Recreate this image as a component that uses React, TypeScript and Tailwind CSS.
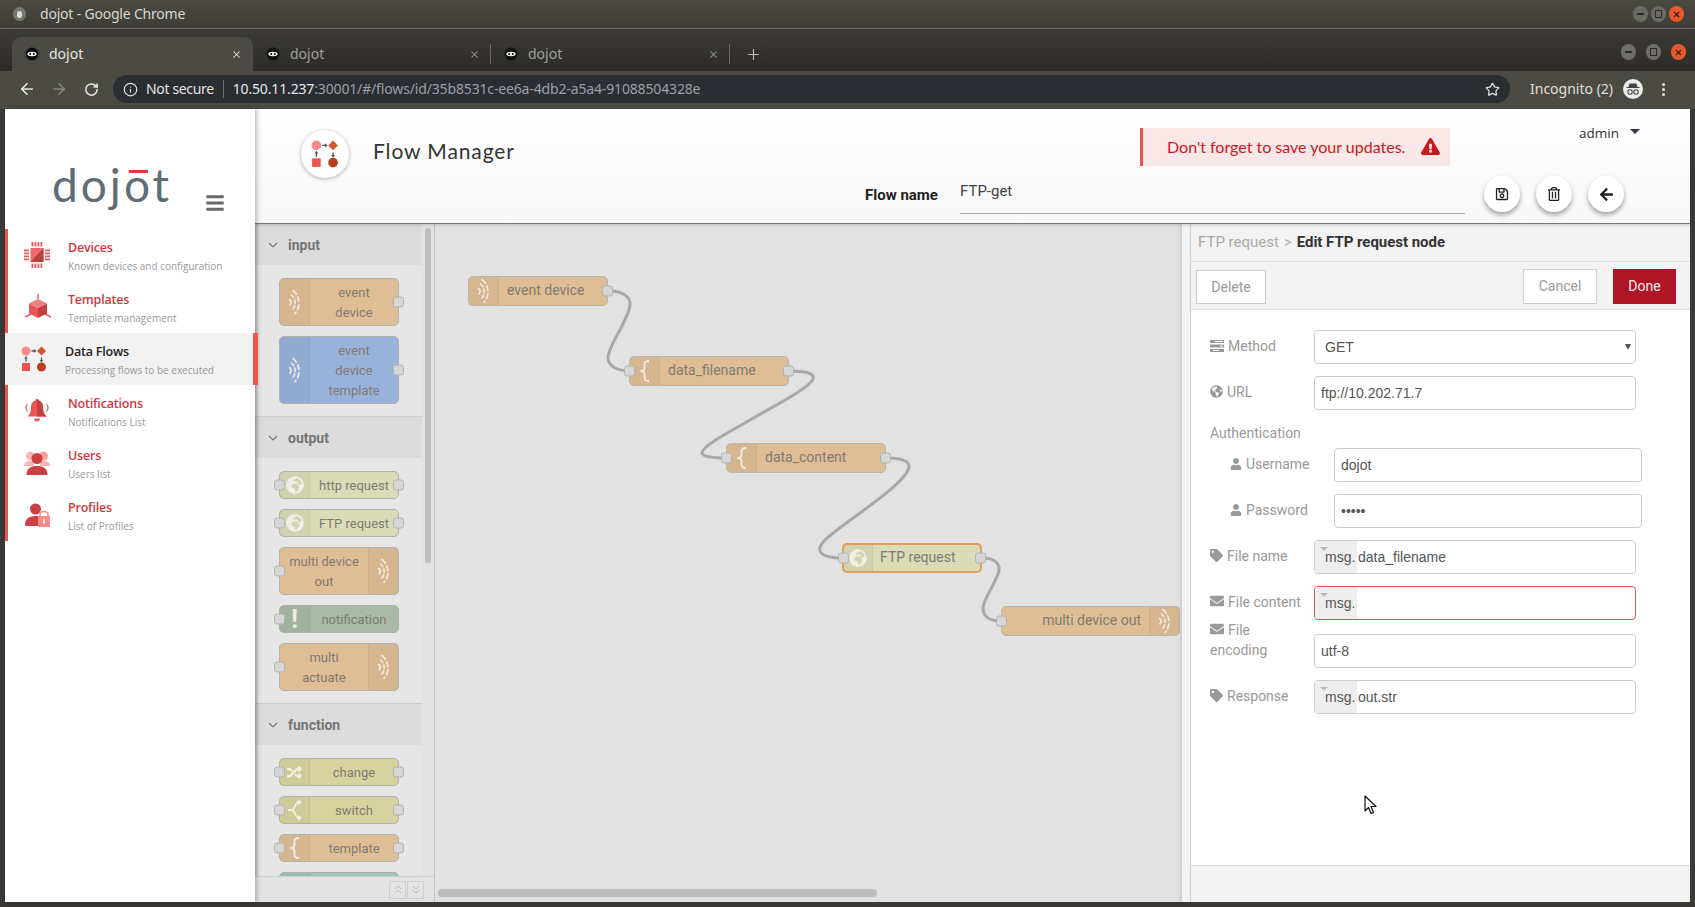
import type { ReactNode } from "react";
import { ArrowLeft, ArrowRight, Info, MoreVertical, Plus, RotateCw, Star, X } from "lucide-react";
import {
  FaArrowLeft,
  FaBars,
  FaEnvelope,
  FaExclamationTriangle,
  FaGlobeAfrica,
  FaGlobeAmericas,
  FaRandom,
  FaRegSave,
  FaRegTrashAlt,
  FaTag,
  FaUser,
} from "react-icons/fa";

function Favicon() {
  return (
    <svg width="14" height="14" viewBox="0 0 14 14" className="shrink-0">
      <circle cx="7" cy="7" r="6.5" fill="#111" />
      <ellipse cx="7" cy="7" rx="4.6" ry="2.2" fill="#eee" />
      <circle cx="5.2" cy="7" r="1" fill="#111" />
      <circle cx="8.8" cy="7" r="1" fill="#111" />
    </svg>
  );
}

function WinBtn({ kind, big }: { kind: "min" | "max" | "close"; big?: boolean }) {
  const bg = kind === "close" ? "bg-[#e4592a]" : big ? "bg-[#6f6e69]" : "bg-[#6a6964]";
  return (
    <div className={`flex h-[16px] w-[15px] items-center justify-center rounded-full ${bg}`}>
      {kind === "min" && <div className="h-[1.5px] w-[7px] bg-[#2d2c29]" />}
      {kind === "max" && <div className="h-[8px] w-[7px] border border-[#2d2c29]" />}
      {kind === "close" && <X size={9} strokeWidth={3} color="#3a1a0c" />}
    </div>
  );
}

function Tab({ active, width, sep }: { active?: boolean; width: string; sep?: boolean }) {
  return (
    <div className={`relative flex h-[34px] items-center pl-[13px] ${width} ${active ? "rounded-t-[9px] bg-[#4b4a44]" : ""}`}>
      <Favicon />
      <span className={`ml-[10px] mt-[-2px] text-[14px] ${active ? "text-[#e6e5e0]" : "text-[#a09f99]"}`}>dojot</span>
      <X size={11} strokeWidth={2.2} className={`absolute right-[11px] ${active ? "text-[#e6e5e0]" : "text-[#a09f99]"}`} />
      {sep && <div className="absolute right-0 top-[7px] h-[20px] w-px bg-[#6a6964]" />}
    </div>
  );
}

function ChromeBars() {
  return (
    <div className="font-['Noto_Sans',sans-serif]">
      <div className="flex h-[28px] items-center border-b-0 bg-gradient-to-b from-[#4a4943] to-[#3e3d38] pl-[13px] pr-[11px]">
        <div className="flex h-[14px] w-[13px] items-center justify-center rounded-full bg-[#77766f]">
          <div className="h-[7px] w-[5px] rounded-full bg-[#ddd]" />
        </div>
        <span className="ml-[14px] mt-[-2px] text-[14px] tracking-[-0.2px] text-[#d8d7d0]">dojot - Google Chrome</span>
        <div className="ml-auto flex gap-[3px]">
          <WinBtn kind="min" />
          <WinBtn kind="max" />
          <WinBtn kind="close" />
        </div>
      </div>
      <div className="h-px bg-[#6b6a64]" />
      <div className="flex h-[42px] items-end bg-gradient-to-b from-[#3c3b37] to-[#2d2b28] pl-[12px] pr-[9px]">
        <Tab active width="w-[241px]" />
        <Tab width="w-[238px]" sep />
        <Tab width="w-[239px]" sep />
        <Plus size={17} strokeWidth={1.6} className="mb-[8px] ml-[15px] text-[#bdbcb6]" />
        <div className="mb-[11px] ml-auto flex gap-[10px]">
          <WinBtn kind="min" big />
          <WinBtn kind="max" big />
          <WinBtn kind="close" big />
        </div>
      </div>
      <div className="flex h-[38px] items-center bg-[#4b4a44] pb-[2px]">
        <ArrowLeft size={18} strokeWidth={2.2} className="ml-[18px] text-[#e8e7e2]" />
        <ArrowRight size={18} strokeWidth={2.2} className="ml-[14px] text-[#85847e]" />
        <RotateCw size={15} strokeWidth={2.4} className="ml-[16px] text-[#e8e7e2]" />
        <div className="ml-[14px] flex h-[28px] w-[1397px] items-center rounded-full bg-[#2a2d31] pl-[10px] pr-[10px] text-[14px]">
          <Info size={15} className="text-[#e0e0e0]" />
          <span className="ml-[8px] mt-[-1px] tracking-[-0.35px] text-[#e4e4e4]">Not secure</span>
          <div className="ml-[9px] h-[18px] w-px bg-[#6d7074]" />
          <span className="ml-[9px] mt-[-1px] tracking-[-0.15px] text-[#e8e8e8]">10.50.11.237</span>
          <span className="mt-[-1px] tracking-[-0.15px] text-[#9aa0a6]">:30001/#/flows/id/35b8531c-ee6a-4db2-a5a4-91088504328e</span>
          <Star size={15} strokeWidth={2} className="ml-auto text-[#e0e0e0]" />
        </div>
        <span className="ml-[20px] mt-[-1px] text-[14px] text-[#e0dfda]">Incognito (2)</span>
        <div className="ml-[10px] flex h-[20px] w-[20px] items-center justify-center rounded-full bg-[#ececec]">
          <svg width="14" height="12" viewBox="0 0 14 12">
            <path d="M3.5 0.5h7l1 3.5h2v1H.5V4h2z" fill="#444" />
            <circle cx="4" cy="9" r="2.2" fill="none" stroke="#444" strokeWidth="1.1" />
            <circle cx="10" cy="9" r="2.2" fill="none" stroke="#444" strokeWidth="1.1" />
          </svg>
        </div>
        <MoreVertical size={17} strokeWidth={2.4} className="ml-[12px] text-[#e0dfda]" />
      </div>
    </div>
  );
}

function ChipIcon() {
  const pins = [0, 1, 2, 3];
  return (
    <svg width="26" height="26" viewBox="0 0 26 26">
      {pins.map((i) => (
        <g key={i} fill="#e25c5f">
          <rect x={7.5 + i * 3} y="0" width="1.8" height="4.5" />
          <rect x={7.5 + i * 3} y="21.5" width="1.8" height="4.5" />
          <rect x="0" y={7.5 + i * 3} width="5" height="1.8" />
          <rect x="21" y={7.5 + i * 3} width="5" height="1.8" />
        </g>
      ))}
      <rect x="6.5" y="6" width="13" height="14" fill="#ef6a6a" />
      <path d="M19.5 6v14H6.5z" fill="#b8403f" />
    </svg>
  );
}

function CubeIcon() {
  return (
    <svg width="28" height="26" viewBox="0 0 28 26">
      <path d="M14 0v5M1 23l6-3M27 23l-6-3" stroke="#e25c5f" strokeWidth="1.4" fill="none" />
      <path d="M14 5l9 4.5L14 14 5 9.5z" fill="#f08080" />
      <path d="M5 9.5l9 4.5v10l-9-4.5z" fill="#ea5558" />
      <path d="M23 9.5L14 14v10l9-4.5z" fill="#c4403f" />
    </svg>
  );
}

function FlowIcon({ size = 26 }: { size?: number }) {
  return (
    <svg width={size} height={size} viewBox="0 0 26 26">
      <circle cx="5" cy="5" r="4.5" fill="#fa8a8a" />
      <path d="M20.5 0.5l4.5 4.5-4.5 4.5L16 5z" fill="#d4562e" />
      <rect x="1" y="17" width="8" height="8" fill="#ef5350" />
      <circle cx="20.5" cy="21" r="4.5" fill="#b8401f" />
      <path d="M10.5 5h3M5 15.5v-3.5M20.5 11.5v3" stroke="#555" strokeWidth="1.3" />
      <path d="M13 3l2.5 2L13 7zM3.2 12.5L5 10l1.8 2.5zM18.7 14l1.8 2.5 1.8-2.5z" fill="#555" />
    </svg>
  );
}

function BellIcon() {
  return (
    <svg width="26" height="26" viewBox="0 0 26 26">
      <path d="M13 1c1 0 1.6.7 1.6 1.5C18 3.500 19 6.500 19 10c0 4 1.500 6.500 3.500 8.500H3.500C5.500 16.500 7 14 7 10c0-3.500 1-6.500 4.400-7.500C11.400 1.700 12 1 13 1z" fill="#ea5558" />
      <path d="M13 1c1 0 1.6.7 1.6 1.500C18 3.500 19 6.500 19 10c0 4 1.500 6.500 3.500 8.500H13z" fill="#c4403f" />
      <path d="M10 20.500h6c0 1.800-1.300 3-3 3s-3-1.200-3-3z" fill="#e25c5f" />
      <path d="M3.500 6C1.500 8.500 1.500 11 3.500 13.500M22.500 6c2 2.500 2 5 0 7.500" stroke="#e25c5f" strokeWidth="1.2" fill="none" />
    </svg>
  );
}

function UsersIcon() {
  return (
    <svg width="26" height="24" viewBox="0 0 26 24">
      <circle cx="6.500" cy="5" r="4.500" fill="#fbb4b4" />
      <circle cx="19.500" cy="5" r="4.500" fill="#f8a0a0" />
      <path d="M0 15c0-4 3-5 6-5s4 2 4 5zM26 15c0-4-3-5-6-5s-4 2-4 5z" fill="#fbb4b4" />
      <circle cx="13" cy="7.500" r="5.500" fill="#cc3f42" />
      <path d="M2.500 24c0-7 4.500-9 10.500-9s10.500 2 10.500 9z" fill="#cc3f42" />
    </svg>
  );
}

function ProfileIcon() {
  return (
    <svg width="26" height="24" viewBox="0 0 26 24">
      <circle cx="11.500" cy="6" r="5.500" fill="#cc3f42" />
      <path d="M1 22c0-6 4-9 10.500-9 2 0 3.500.3 4.500 1v9H3c-1.500 0-2-.5-2-1z" fill="#cc3f42" />
      <path d="M16 13v-1.500c0-4 8-4 8 0V13" stroke="#fa9090" strokeWidth="1.6" fill="none" />
      <rect x="14" y="13" width="12" height="11" fill="#fa8a8a" />
      <rect x="19" y="16.500" width="2" height="4" fill="#fff" />
    </svg>
  );
}

const menu = [
  { label: "Devices", sub: "Known devices and configuration", icon: <ChipIcon /> },
  { label: "Templates", sub: "Template management", icon: <CubeIcon /> },
  { label: "Data Flows", sub: "Processing flows to be executed", icon: <FlowIcon />, active: true },
  { label: "Notifications", sub: "Notifications List", icon: <BellIcon /> },
  { label: "Users", sub: "Users list", icon: <UsersIcon /> },
  { label: "Profiles", sub: "List of Profiles", icon: <ProfileIcon /> },
];

function Sidebar() {
  return (
    <aside className="relative z-20 w-[250px] shrink-0 bg-white font-['Open_Sans',sans-serif] shadow-[2px_0_5px_rgba(0,0,0,0.25)]">
      <div className="relative h-[120px]">
        <span className="absolute left-[47px] top-[41px] font-['Lato',sans-serif] text-[46px] leading-[70px] tracking-[3px] text-[#5f6d75]">
          dojot
        </span>
        <div className="absolute left-[124px] top-[61px] h-[3px] w-[19px] bg-[#ee3338]" />
        <FaBars size={20} className="absolute left-[200px] top-[84px] text-[#6a6a6a]" />
      </div>
      {menu.map((m) =>
        m.active ? (
          <div key={m.label} className="relative flex h-[52px] items-center bg-[#f2f2f2] pl-[16px]">
            <div className="flex w-[44px] shrink-0">{m.icon}</div>
            <div className="pt-[4px]">
              <div className="text-[12.5px] font-semibold leading-[18px] tracking-[-0.2px] text-[#222]">{m.label}</div>
              <div className="text-[10px] leading-[18px] text-[#999]">{m.sub}</div>
            </div>
            <div className="absolute right-[-3px] top-0 h-full w-[5px] bg-[#ef5350]" />
          </div>
        ) : (
          <div key={m.label} className="flex h-[52px] items-center border-l-[3px] border-[#ef5350] pl-[16px]">
            <div className="flex w-[44px] shrink-0">{m.icon}</div>
            <div className="pt-[4px]">
              <div className="text-[12.5px] font-semibold leading-[18px] tracking-[-0.2px] text-[#d6373d]">{m.label}</div>
              <div className="text-[10px] leading-[18px] text-[#999]">{m.sub}</div>
            </div>
          </div>
        ),
      )}
    </aside>
  );
}

function RoundBtn({ children }: { children: ReactNode }) {
  return (
    <div className="flex h-[36px] w-[36px] items-center justify-center rounded-full bg-white text-[#222] shadow-[0_3px_5px_rgba(0,0,0,0.35)]">
      {children}
    </div>
  );
}

function Header() {
  return (
    <header className="relative z-10 flex h-[115px] shrink-0 border-b border-[#777] bg-gradient-to-b from-white to-[#f8f8f8] shadow-[0_1px_3px_rgba(0,0,0,0.2)]">
      <div className="mt-[21px] flex h-[48px] w-[610px] shrink-0 items-center pl-[46px]">
        <div className="flex h-[48px] w-[48px] items-center justify-center rounded-full bg-white shadow-[0_1px_4px_rgba(0,0,0,0.3)]">
          <FlowIcon size={28} />
        </div>
        <span className="mb-[7px] ml-[24px] font-['Lato',sans-serif] text-[21px] tracking-[0.9px] text-[#333]">Flow Manager</span>
      </div>
      <div className="flex flex-1 flex-col">
        <div className="flex pt-[19px]">
          <div className="ml-[275px] flex h-[38px] w-[310px] items-center border-l-[3px] border-[#ef5350] bg-[#fae8e8] pb-[1px] pl-[24px] font-['Lato',sans-serif] text-[16px] text-[#c8191f]">
            <span>Don't forget to save your updates.</span>
            <FaExclamationTriangle size={19} className="ml-[16px]" />
          </div>
          <div className="ml-[129px] mt-[-5px] flex h-[20px] items-center font-['Open_Sans',sans-serif] text-[13.500px] text-[#333]">
            admin
            <div className="ml-[11px] mt-[-3px] h-0 w-0 border-x-[5px] border-t-[5px] border-x-transparent border-t-[#2c3a50]" />
          </div>
        </div>
        <div className="mt-[10px] flex items-start font-['Roboto',sans-serif] text-[15px]">
          <span className="mt-[8px] w-[95px] font-bold text-[#222]">Flow name</span>
          <div className="h-[38px] w-[505px] border-b border-[#aaa] pt-[4px] text-[#444]">FTP-get</div>
          <div className="ml-[19px] flex gap-[16px]">
            <RoundBtn><FaRegSave size={14} /></RoundBtn>
            <RoundBtn><FaRegTrashAlt size={14} /></RoundBtn>
            <RoundBtn><FaArrowLeft size={15} /></RoundBtn>
          </div>
        </div>
      </div>
    </header>
  );
}

function WaveIcon() {
  return (
    <svg width="14" height="26" viewBox="0 0 14 26" fill="none" stroke="#f1ece2" strokeWidth="1.600" strokeLinecap="round">
      <path d="M5 1.500C12 7 13 18 7 24.500" strokeDasharray="5 3" />
      <path d="M3.500 6C8 10 8.500 16 4.500 20.500" strokeDasharray="3.500 2.500" />
      <path d="M1.500 10.500C3.500 12 3.500 14 2 16" />
    </svg>
  );
}

function BraceIcon() {
  return (
    <svg width="11" height="22" viewBox="0 0 11 22" fill="none" stroke="#f1ece2" strokeWidth="1.900">
      <path d="M10 1C6.500 1 5.500 2 5.500 5v3c0 2-1.500 3-4 3 2.500 0 4 1 4 3v3c0 3 1 4 4.500 4" />
    </svg>
  );
}

function SwitchIcon() {
  return (
    <svg width="14" height="22" viewBox="0 0 14 22" fill="none" stroke="#f1efdf" strokeWidth="1.800">
      <path d="M0 11h4C7 11 7 3 11 3M4 11c3 0 3 8 7 8" />
      <path d="M10 0l4 3-4 3zM10 16l4 3-4 3z" fill="#f1efdf" stroke="none" />
    </svg>
  );
}

function MethodIcon() {
  return (
    <svg width="14" height="12" viewBox="0 0 14 12">
      <path d="M0 0h14v3H0zM0 4.500h14v3H0zM0 9h14v3H0z" fill="#999" />
      <path d="M5 1h8v1H5zM10 5.500h3v1h-3zM3 10h6v1H3z" fill="#fff" />
    </svg>
  );
}

function Port({ side }: { side: "left" | "right" }) {
  return (
    <div
      className={`absolute top-1/2 z-10 h-[11px] w-[11px] -translate-y-1/2 rounded-[3px] border border-[#b3b3b3] bg-[#d6d6d6] ${
        side === "left" ? "left-[-6px]" : "right-[-6px]"
      }`}
    />
  );
}

type PaletteNodeProps = {
  label: ReactNode;
  icon: ReactNode;
  bg: string;
  h: string;
  inPort?: boolean;
  outPort?: boolean;
  iconRight?: boolean;
};

function PaletteNode({ label, icon, bg, h, inPort, outPort, iconRight }: PaletteNodeProps) {
  const iconBox = (
    <div className={`flex w-[30px] shrink-0 items-center justify-center bg-black/[0.04] ${iconRight ? "border-l" : "border-r"} border-black/5`}>
      {icon}
    </div>
  );
  return (
    <div className={`relative flex w-[120px] rounded-[5px] border border-[#b2b0aa] ${bg} ${h}`}>
      {inPort && <Port side="left" />}
      {!iconRight && iconBox}
      <div className="flex flex-1 items-center justify-center pt-[2px] text-center text-[13px] leading-[20px] text-[#807a70]">{label}</div>
      {iconRight && iconBox}
      {outPort && <Port side="right" />}
    </div>
  );
}

function PaletteSection({ title, children, clip }: { title: string; children: ReactNode; clip?: boolean }) {
  return (
    <div className="w-[167px] border-b border-[#cfcfcf]">
      <div className="flex h-[41px] items-center bg-[#dcdcdc] pl-[13px] pt-[1px] text-[14px] font-bold text-[#757575]">
        <svg width="10" height="6" viewBox="0 0 10 6" fill="none" stroke="#777" strokeWidth="1.200">
          <path d="M1 1l4 4 4-4" />
        </svg>
        <span className="ml-[10px]">{title}</span>
      </div>
      <div className={`flex flex-col gap-[10px] bg-[#e6e6e6] pl-[24px] pt-[13px] ${clip ? "" : "pb-[12px]"}`}>{children}</div>
    </div>
  );
}

const tan = "bg-[#dfbe95]";
const globe = <FaGlobeAfrica size={18} className="text-[#f1efe5]" />;

function Palette() {
  return (
    <div className="relative flex w-[180px] shrink-0 flex-col border-r border-[#c2c2c2] bg-[#e3e3e3] font-['Roboto',sans-serif]">
      <div className="flex-1 overflow-hidden">
        <PaletteSection title="input">
          <PaletteNode label={<>event<br />device</>} icon={<WaveIcon />} bg={tan} h="h-[48px]" outPort />
          <PaletteNode label={<>event<br />device<br />template</>} icon={<WaveIcon />} bg="bg-[#98b2dc]" h="h-[68px]" outPort />
        </PaletteSection>
        <PaletteSection title="output">
          <PaletteNode label="http request" icon={globe} bg="bg-[#dadcb8]" h="h-[28px]" inPort outPort />
          <PaletteNode label="FTP request" icon={globe} bg="bg-[#dadcb8]" h="h-[28px]" inPort outPort />
          <PaletteNode label={<>multi device<br />out</>} icon={<WaveIcon />} bg={tan} h="h-[48px]" inPort iconRight />
          <PaletteNode label="notification" icon={<span className="text-[26px] font-bold leading-none text-[#e8ebe4]">!</span>} bg="bg-[#a8baa6]" h="h-[28px]" inPort />
          <PaletteNode label={<>multi<br />actuate</>} icon={<WaveIcon />} bg={tan} h="h-[48px]" inPort iconRight />
        </PaletteSection>
        <PaletteSection title="function" clip>
          <PaletteNode label="change" icon={<FaRandom size={15} className="text-[#f1efdf]" />} bg="bg-[#d6d49e]" h="h-[28px]" inPort outPort />
          <PaletteNode label="switch" icon={<SwitchIcon />} bg="bg-[#d6d49e]" h="h-[28px]" inPort outPort />
          <PaletteNode label="template" icon={<BraceIcon />} bg={tan} h="h-[28px]" inPort outPort />
          <PaletteNode label="" icon={null} bg="bg-[#9cc4b8]" h="h-[28px]" inPort outPort />
        </PaletteSection>
      </div>
      <div className="z-10 flex h-[26px] shrink-0 items-center justify-end gap-[1px] border-t border-[#cfcfcf] bg-[#e3e3e3] pr-[10px]">
        <div className="flex h-[18px] w-[17px] items-center justify-center border border-[#cfcfcf]">
          <svg width="8" height="9" viewBox="0 0 8 9" fill="none" stroke="#bbb" strokeWidth="1"><path d="M1 4l3-3 3 3M1 8l3-3 3 3" /></svg>
        </div>
        <div className="flex h-[18px] w-[17px] items-center justify-center border border-[#cfcfcf]">
          <svg width="8" height="9" viewBox="0 0 8 9" fill="none" stroke="#bbb" strokeWidth="1"><path d="M1 1l3 3 3-3M1 5l3 3 3-3" /></svg>
        </div>
      </div>
      <div className="absolute left-[170px] top-[4px] h-[335px] w-[6px] rounded-full bg-[#bdbdbd]" />
      <div className="pointer-events-none absolute inset-y-0 left-0 w-[4px] bg-gradient-to-r from-black/15 to-transparent" />
    </div>
  );
}

function CanvasNode({ className, label, icon, selected, iconRight }: { className: string; label: string; icon: ReactNode; selected?: boolean; iconRight?: boolean }) {
  return (
    <div className={`absolute flex h-[30px] rounded-[5px] ${selected ? "border-2 border-[#e59b5b]" : "border border-[#b9b6ae]"} ${className}`}>
      {iconRight ? (
        <>
          <Port side="left" />
          <div className="flex flex-1 items-center justify-end pb-[2px] pr-[8px] text-[14px] text-[#807a70]">{label}</div>
          <div className="flex w-[30px] items-center justify-center border-l border-black/5 bg-black/[0.04]">{icon}</div>
        </>
      ) : (
        <>
          <div className={`flex items-center justify-center border-r border-black/5 bg-black/[0.04] ${selected ? "w-[29px]" : "w-[30px]"}`}>{icon}</div>
          <div className={`flex flex-1 items-center pb-[2px] text-[14px] text-[#807a70] ${selected ? "pl-[7px]" : "pl-[8px]"}`}>{label}</div>
          {label !== "event device" && <Port side="left" />}
          <Port side="right" />
        </>
      )}
    </div>
  );
}

function FlowCanvas() {
  return (
    <div className="relative w-[747px] shrink-0 overflow-hidden bg-[#e2e2e2] font-['Roboto',sans-serif]">
      <svg className="absolute inset-0 h-full w-full" viewBox="435 224 747 678" fill="none" stroke="#a8a8a8" strokeWidth="3">
        <path d="M609 291 C624 291 631 298 630 305 C628 322 608 345 608 358 C608 366 618 371 629 371" />
        <path d="M789 371 C805 371 815 373 813 379 C810 388 770 408 745 423 C720 437 702 447 702 453 C702 457 715 458 726 458" />
        <path d="M886 458 C905 458 915 462 905 475 C890 495 840 525 825 540 C812 553 825 558 842 558" />
        <path d="M982 558 C998 558 1001 566 998 574 C992 590 983 600 983 608 C983 618 992 621 1001 621" />
      </svg>
      <CanvasNode className={`left-[33px] top-[52px] w-[140px] ${tan}`} label="event device" icon={<WaveIcon />} />
      <CanvasNode className={`left-[194px] top-[132px] w-[160px] ${tan}`} label="data_filename" icon={<BraceIcon />} />
      <CanvasNode className={`left-[291px] top-[219px] w-[160px] ${tan}`} label="data_content" icon={<BraceIcon />} />
      <CanvasNode className="left-[407px] top-[319px] w-[140px] bg-[#dadcb8]" label="FTP request" icon={globe} selected />
      <CanvasNode className={`left-[566px] top-[382px] w-[179px] ${tan}`} label="multi device out" icon={<WaveIcon />} iconRight />
      <div className="absolute bottom-[5px] left-[3px] h-[8px] w-[439px] rounded-full bg-[#bdbdbd]" />
      <div className="pointer-events-none absolute inset-y-0 right-0 w-[4px] bg-gradient-to-l from-black/10 to-transparent" />
    </div>
  );
}

function Field({ icon, label, className, children, labelWidth = "w-[104px] mt-[-3px]" }: { icon?: ReactNode; label: ReactNode; className?: string; children: ReactNode; labelWidth?: string }) {
  return (
    <div className={`flex h-[34px] items-center ${className ?? ""}`}>
      <div className={`shrink-0 text-[14px] leading-[20px] text-[#999] ${labelWidth}`}>
        <span className="mr-[4px] inline-block align-[-1px]">{icon}</span>
        {label}
      </div>
      {children}
    </div>
  );
}

const inputCls =
  "h-[34px] rounded-[4px] border border-[#ccc] bg-white px-[6px] font-['Liberation_Sans',sans-serif] text-[14px] text-[#555] outline-none";

function TypedInput({ value, invalid, className }: { value: string; invalid?: boolean; className?: string }) {
  return (
    <div className={`relative flex h-[34px] w-[322px] overflow-hidden rounded-[4px] border bg-white font-['Liberation_Sans',sans-serif] text-[14px] text-[#555] ${invalid ? "border-[#d9534f]" : "border-[#ccc]"} ${className ?? ""}`}>
      <div className="flex w-[42px] items-center bg-[#eee] pl-[10px]">msg.</div>
      <div className="absolute left-[5px] top-[6px] h-0 w-0 border-x-[4px] border-t-[4px] border-x-transparent border-t-[#bbb]" />
      <div className="flex items-center pl-[1px]">{value}</div>
    </div>
  );
}

function EditPanel() {
  const ic = 13;
  return (
    <div className="flex flex-1 flex-col border-l border-[#d0d0d0] bg-white font-['Roboto',sans-serif]">
      <div className="flex h-[38px] shrink-0 items-center border-b border-[#ddd] bg-[#f3f3f3] pl-[7px] text-[15px]">
        <span className="text-[#aaa]">FTP request</span>
        <span className="mx-[5px] text-[#aaa]">&gt;</span>
        <span className="font-bold tracking-[-0.03px] text-[#333]">Edit FTP request node</span>
      </div>
      <div className="flex h-[48px] shrink-0 items-center border-b border-[#ddd] bg-[#f3f3f3] pl-[5px] pr-[14px] text-[14px]">
        <button className="mt-[3px] h-[34px] w-[70px] border border-[#ccc] bg-white text-[#999]">Delete</button>
        <button className="ml-auto mt-[1px] h-[35px] w-[74px] border border-[#ccc] bg-white text-[#999]">Cancel</button>
        <button className="ml-[16px] mt-[1px] h-[35px] w-[63px] bg-[#ae1526] text-[#eee]">Done</button>
      </div>
      <div className="flex-1 pl-[19px] pt-[20px]">
        <Field icon={<MethodIcon />} label="Method">
          <div className="relative">
            <select defaultValue="GET" className={`${inputCls} w-[322px] appearance-none pl-[10px]`}>
              <option>GET</option>
            </select>
            <div className="absolute right-[5px] top-[14px] h-0 w-0 border-x-[3px] border-t-[6px] border-x-transparent border-t-[#555]" />
          </div>
        </Field>
        <Field icon={<FaGlobeAmericas size={ic} />} label="URL" className="mt-[12px]">
          <input readOnly defaultValue="ftp://10.202.71.7" className={`${inputCls} w-[322px]`} />
        </Field>
        <div className="flex h-[38px] items-center pt-[9px] text-[14px] text-[#999]">Authentication</div>
        <Field icon={<FaUser size={ic - 1} />} label="Username" className="ml-[20px]">
          <input readOnly defaultValue="dojot" className={`${inputCls} w-[308px]`} />
        </Field>
        <Field icon={<FaUser size={ic - 1} />} label="Password" className="ml-[20px] mt-[12px]">
          <input readOnly type="password" defaultValue="dojot" className={`${inputCls} w-[308px]`} />
        </Field>
        <Field icon={<FaTag size={ic} />} label="File name" className="mt-[12px]">
          <TypedInput value="data_filename" />
        </Field>
        <Field icon={<FaEnvelope size={ic + 1} />} label="File content" className="mt-[12px]">
          <TypedInput value="" invalid />
        </Field>
        <Field icon={<FaEnvelope size={ic + 1} />} label="File encoding" className="mt-[14px]" labelWidth="w-[104px] pr-[30px] self-start mt-[-14px]">
          <input readOnly defaultValue="utf-8" className={`${inputCls} w-[322px]`} />
        </Field>
        <Field icon={<FaTag size={ic} />} label="Response" className="mt-[12px]">
          <TypedInput value="out.str" />
        </Field>
      </div>
      <div className="h-[37px] shrink-0 border-t border-[#ddd] bg-[#f3f3f3]" />
    </div>
  );
}

function Cursor() {
  return (
    <svg className="absolute left-[1364px] top-[795px] z-30" width="14" height="20" viewBox="0 0 14 20">
      <path d="M1 1v15l3.500-3.500 2.500 6 2.500-1-2.500-6H12z" fill="#fff" stroke="#111" strokeWidth="1.200" strokeLinejoin="round" />
    </svg>
  );
}

export default function App() {
  return (
    <div className="relative flex h-[907px] w-[1695px] flex-col overflow-hidden bg-[#3a3935]">
      <ChromeBars />
      <div className="mx-[5px] mb-[5px] flex min-h-0 flex-1">
        <Sidebar />
        <div className="flex min-w-0 flex-1 flex-col">
          <Header />
          <div className="flex min-h-0 flex-1">
            <Palette />
            <FlowCanvas />
            <div className="w-[8px] shrink-0 bg-[#f3f3f3]" />
            <EditPanel />
          </div>
        </div>
      </div>
      <Cursor />
    </div>
  );
}
